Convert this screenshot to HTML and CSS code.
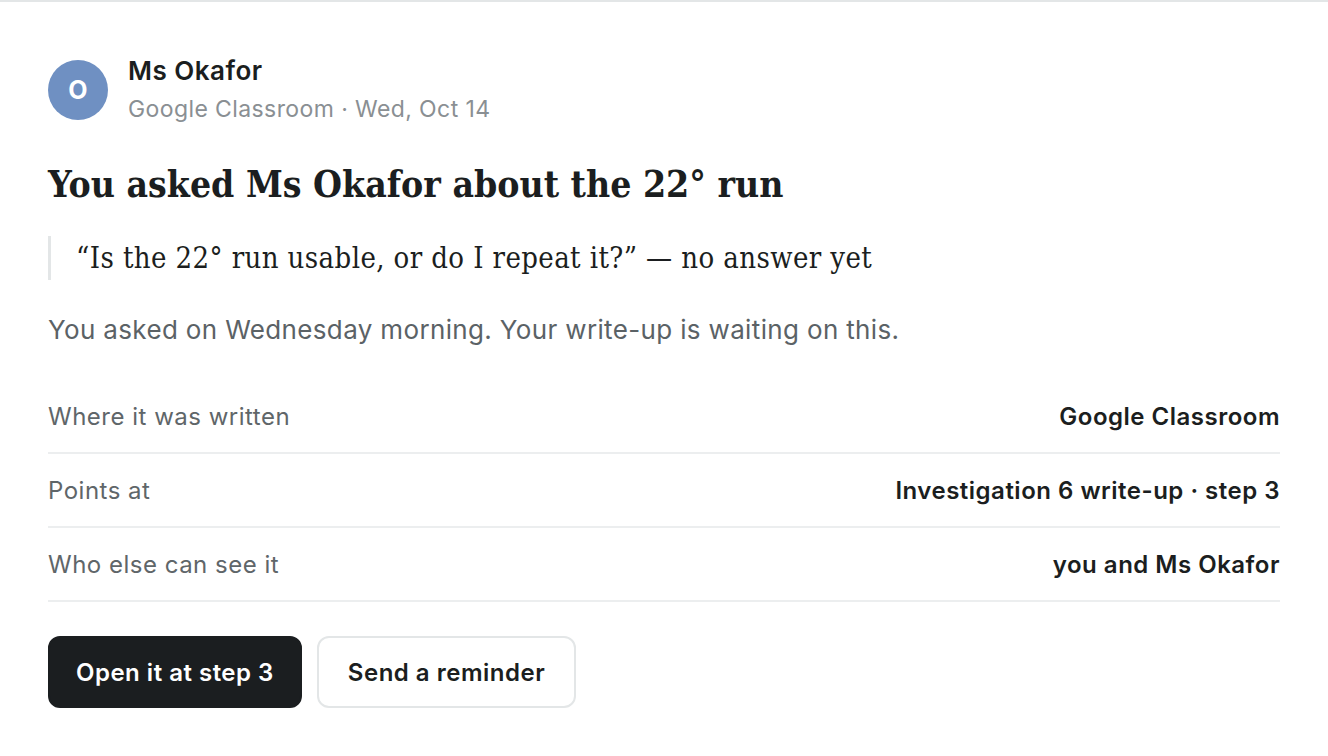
FILE: index.html
```html
<!DOCTYPE html>
<html lang="en">
<head>
<meta charset="utf-8">
<title>Ms Okafor</title>
<link rel="stylesheet" href="styles.css">
</head>
<body>
<main class="card">
  <header class="sender">
    <div class="avatar">O</div>
    <div class="sender-text">
      <div class="sender-name">Ms Okafor</div>
      <div class="sender-meta">Google Classroom · Wed, Oct 14</div>
    </div>
  </header>
  <h1 class="title">You asked Ms Okafor about the 22° run</h1>
  <blockquote class="quote">“Is the 22° run usable, or do I repeat it?” — no answer yet</blockquote>
  <p class="note">You asked on Wednesday morning. Your write-up is waiting on this.</p>
  <dl class="facts">
    <div class="fact"><dt>Where it was written</dt><dd>Google Classroom</dd></div>
    <div class="fact"><dt>Points at</dt><dd>Investigation 6 write-up · step 3</dd></div>
    <div class="fact"><dt>Who else can see it</dt><dd>you and Ms Okafor</dd></div>
  </dl>
  <div class="actions">
    <button class="btn btn-primary">Open it at step 3</button>
    <button class="btn btn-secondary">Send a reminder</button>
  </div>
</main>
</body>
</html>
```
FILE: styles.css
```css
html, body {
  margin: 0;
  padding: 0;
  background: #ffffff;
}
body {
  font-family: Inter, "Noto Sans", sans-serif;
  color: #1b1e20;
  border-top: 2px solid #e3e6e7;
}
.card {
  padding: 54px 48px 0 48px;
}
.sender {
  display: flex;
  align-items: center;
  gap: 20px;
}
.avatar {
  width: 60px;
  height: 60px;
  border-radius: 50%;
  background: #6f90c2;
  color: #ffffff;
  display: flex;
  align-items: center;
  justify-content: center;
  font-size: 25px;
  font-weight: 700;
  flex: none;
}
.sender-text {
  display: flex;
  flex-direction: column;
  gap: 8px;
}
.sender-name {
  font-size: 26px;
  font-weight: 600;
  line-height: 30px;
  letter-spacing: 0.5px;
}
.sender-meta {
  font-size: 23px;
  line-height: 30px;
  color: #8a8f93;
  letter-spacing: 0.4px;
}
.title {
  margin: 37px 0 0 0;
  font-family: "DejaVu Serif Condensed", "DejaVu Serif", serif;
  font-stretch: condensed;
  font-size: 37px;
  line-height: 46px;
  font-weight: 700;
  letter-spacing: 0;
  color: #1b1e20;
}
.quote {
  margin: 29px 0 0 0;
  padding: 0 0 0 25px;
  border-left: 3px solid #e3e6e7;
  font-family: "DejaVu Serif Condensed", "DejaVu Serif", serif;
  font-stretch: condensed;
  font-size: 29px;
  line-height: 44px;
  color: #1b1e20;
  letter-spacing: 0.4px;
}
.note {
  margin: 34px 0 0 0;
  font-size: 26px;
  line-height: 32px;
  color: #5b6266;
  letter-spacing: 0.35px;
}
.facts {
  margin: 34px 0 0 0;
}
.fact {
  display: flex;
  justify-content: space-between;
  align-items: center;
  height: 72px;
  border-bottom: 2px solid #eceeef;
}
.fact dt {
  font-size: 24px;
  color: #5f6669;
  letter-spacing: 0.5px;
}
.fact dd {
  margin: 0;
  font-size: 24px;
  font-weight: 600;
  color: #1b1e20;
  letter-spacing: 0.5px;
}
.actions {
  margin-top: 34px;
  display: flex;
  gap: 15px;
}
.btn {
  height: 72px;
  padding: 0 26px;
  border-radius: 12px;
  font-family: Inter, "Noto Sans", sans-serif;
  font-size: 24px;
  font-weight: 600;
  letter-spacing: 0.5px;
  cursor: pointer;
}
.btn-primary {
  background: #1b1e20;
  color: #ffffff;
  border: 2px solid #1b1e20;
}
.btn-secondary {
  padding: 0 29px;
  background: #ffffff;
  color: #1b1e20;
  border: 2px solid #e3e6e7;
}
```
